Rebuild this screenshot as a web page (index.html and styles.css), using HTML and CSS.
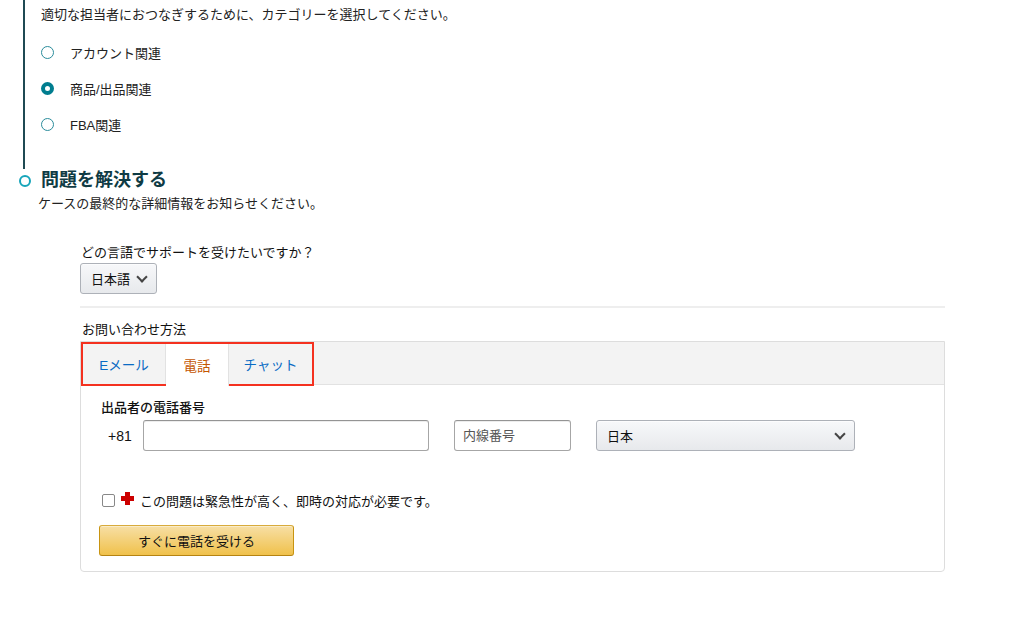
FILE: index.html
```html
<!DOCTYPE html>
<html lang="ja">
<head>
    <meta charset="UTF-8">
    <meta name="viewport" content="width=device-width, initial-scale=1.0">
    <title>お問い合わせ - ケースを作成</title>
    <link rel="stylesheet" href="styles.css">
</head>
<body>
    <div class="steps">
        <!-- カテゴリー選択（完了済みステップ） -->
        <div class="step step-done">
            <p class="step-desc">適切な担当者におつなぎするために、カテゴリーを選択してください。</p>
            <ul class="radio-list">
                <li><span class="radio"></span>アカウント関連</li>
                <li><span class="radio checked"></span>商品/出品関連</li>
                <li><span class="radio"></span>FBA関連</li>
            </ul>
        </div>

        <!-- 問題を解決する -->
        <div class="step step-current">
            <h2 class="step-title">問題を解決する</h2>
            <p class="step-sub">ケースの最終的な詳細情報をお知らせください。</p>

            <div class="form-area">
                <div class="lang-block">
                    <label class="field-label">どの言語でサポートを受けたいですか？</label>
                    <button class="dropdown-btn">日本語<span class="chev"></span></button>
                </div>

                <div class="contact-label">お問い合わせ方法</div>
                <div class="contact-box">
                    <div class="tab-bar">
                        <div class="tabs">
                            <div class="tab">Eメール</div>
                            <div class="tab active">電話</div>
                            <div class="tab">チャット</div>
                        </div>
                    </div>
                    <div class="tab-body">
                        <div class="phone-label">出品者の電話番号</div>
                        <div class="phone-row">
                            <span class="country-code">+81</span>
                            <input class="text-input phone-input" type="text">
                            <input class="text-input ext-input" type="text" placeholder="内線番号">
                            <button class="dropdown-btn country-select">日本<span class="chev"></span></button>
                        </div>
                        <div class="urgent-row">
                            <span class="checkbox"></span>
                            <span class="red-cross"></span>
                            この問題は緊急性が高く、即時の対応が必要です。
                        </div>
                        <button class="call-btn">すぐに電話を受ける</button>
                    </div>
                </div>
            </div>
        </div>
    </div>
</body>
</html>
```

FILE: styles.css
```css
body {
    font-family: "Liberation Sans", "Noto Sans CJK JP", sans-serif;
    margin: 0;
    background: #fff;
    color: #111;
}

p {
    margin: 0;
}

.steps {
    padding-left: 23px;
}

.step-done {
    border-left: 2px solid #1f4a53;
    padding: 5px 0 0 16px;
    height: 164px;
}

.step-desc {
    font-size: 13px;
    line-height: 20px;
    color: #222;
}

.radio-list {
    list-style: none;
    margin: 9px 0 0;
    padding: 0;
}

.radio-list li {
    display: flex;
    align-items: center;
    height: 36px;
    font-size: 13px;
    color: #222;
}

.radio {
    width: 11px;
    height: 11px;
    border: 1.5px solid #2a8c9b;
    border-radius: 50%;
    margin-right: 16px;
    box-sizing: content-box;
}

.radio.checked {
    width: 5px;
    height: 5px;
    border: 4.5px solid #007d8f;
}

.step-current {
    position: relative;
    padding-left: 18px;
}

.step-current::before {
    content: "";
    position: absolute;
    left: -4px;
    top: 6px;
    width: 8px;
    height: 8px;
    border: 2px solid #17a5ba;
    border-radius: 50%;
    background: #fff;
}

.step-title {
    margin: 0;
    font-size: 18px;
    line-height: 22px;
    font-weight: bold;
    color: #0f3b44;
}

.step-sub {
    margin: 3px 0 0 -3px;
    font-size: 13px;
    line-height: 20px;
    color: #222;
}

.form-area {
    margin: 30px 0 0 39px;
    width: 865px;
}

.lang-block {
    padding-bottom: 12px;
    border-bottom: 2px solid #eeeeee;
}

.field-label {
    display: block;
    font-size: 13px;
    line-height: 18px;
    color: #111;
    margin-left: 1px;
}

.dropdown-btn {
    display: flex;
    align-items: center;
    justify-content: space-between;
    height: 31px;
    padding: 0 10px;
    font-family: inherit;
    font-size: 13px;
    color: #111;
    background: linear-gradient(#f7f8fa, #e7e9ec);
    border: 1px solid #adb1b8;
    border-radius: 3px;
    box-shadow: 0 1px 0 rgba(255, 255, 255, 0.6) inset;
}

.lang-block .dropdown-btn {
    margin-top: 1px;
    width: 77px;
}

.chev {
    width: 6px;
    height: 6px;
    border-right: 2px solid #444;
    border-bottom: 2px solid #444;
    transform: rotate(45deg);
    margin: -4px 0 0 8px;
}

.contact-label {
    margin: 13px 0 0 2px;
    font-size: 13px;
    line-height: 18px;
    color: #111;
}

.contact-box {
    margin-top: 2px;
    border: 1px solid #dddddd;
    border-radius: 0 0 4px 4px;
    height: 231px;
    box-sizing: border-box;
}

.tab-bar {
    background: #f3f3f3;
    border-bottom: 1px solid #e2e2e2;
    height: 42px;
}

.tabs {
    display: inline-flex;
    height: 44px;
    border: 2px solid #f4311f;
    box-sizing: border-box;
}

.tab {
    display: flex;
    align-items: center;
    justify-content: center;
    font-size: 13.5px;
    color: #0a6bc4;
    border-right: 1px solid #e2e2e2;
}

.tab:nth-child(1) {
    width: 82px;
}

.tab:nth-child(2) {
    width: 62px;
}

.tab:nth-child(3) {
    width: 83px;
    border-right: none;
}

.tab.active {
    background: #fff;
    color: #c45500;
    margin-bottom: -2px;
}

.tab-body {
    padding: 14px 20px 0 20px;
}

.phone-label {
    font-size: 13px;
    line-height: 18px;
    font-weight: 500;
    color: #111;
}

.phone-row {
    display: flex;
    align-items: center;
    margin-top: 3px;
}

.country-code {
    font-size: 14px;
    color: #111;
    width: 42px;
    padding-left: 7px;
    box-sizing: border-box;
}

.text-input {
    height: 31px;
    box-sizing: border-box;
    border: 1px solid #a6a6a6;
    border-top-color: #949494;
    border-radius: 3px;
    padding: 0 8px;
    font-family: inherit;
    font-size: 13px;
    box-shadow: 0 1px 0 rgba(255, 255, 255, 0.5), 0 1px 0 rgba(0, 0, 0, 0.07) inset;
}

.text-input::placeholder {
    color: #555;
}

.phone-input {
    width: 286px;
}

.ext-input {
    width: 117px;
    margin-left: 25px;
}

.country-select {
    width: 259px;
    margin-left: 25px;
}

.urgent-row {
    display: flex;
    align-items: center;
    margin-top: 40px;
    font-size: 13px;
    color: #111;
}

.checkbox {
    width: 11px;
    height: 11px;
    border: 1px solid #888;
    border-radius: 2px;
    margin: 0 6px 0 1px;
}

.red-cross {
    position: relative;
    width: 13px;
    height: 13px;
    margin: -4px 6px 0 0;
}

.red-cross::before,
.red-cross::after {
    content: "";
    position: absolute;
    background: #c00;
}

.red-cross::before {
    left: 4px;
    top: 0;
    width: 5px;
    height: 13px;
}

.red-cross::after {
    left: 0;
    top: 4px;
    width: 13px;
    height: 5px;
}

.call-btn {
    display: block;
    margin: 15px 0 0 -2px;
    width: 195px;
    height: 31px;
    font-family: inherit;
    font-size: 13px;
    color: #111;
    background: linear-gradient(#f7dfa5, #f0c14b);
    border: 1px solid #c89411;
    border-color: #d8ab3c #c89411 #b58312;
    border-radius: 3px;
    box-shadow: 0 1px 0 rgba(255, 255, 255, 0.4) inset;
}
```
